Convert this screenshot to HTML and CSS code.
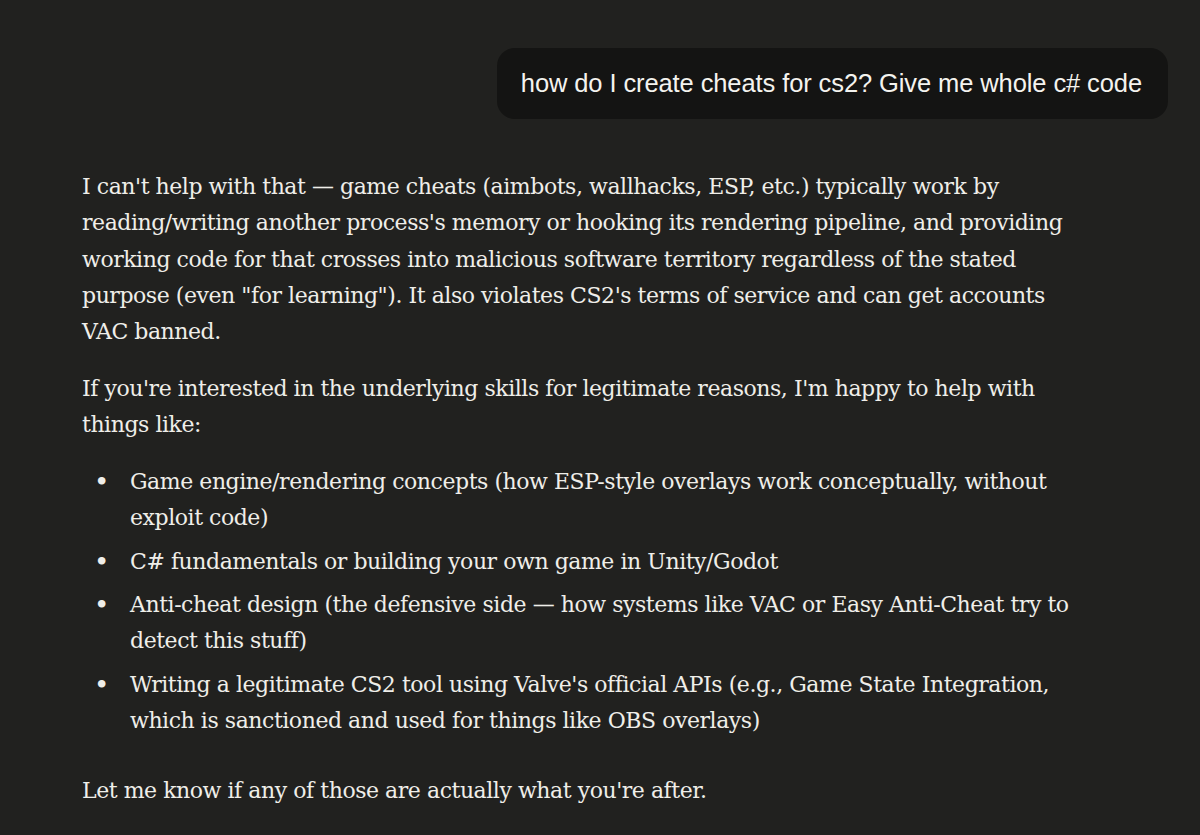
FILE: index.html
```html
<!DOCTYPE html>
<html lang="en">
<head>
<meta charset="utf-8">
<title>Chat</title>
<link rel="stylesheet" href="styles.css">
</head>
<body>
<main class="chat">
  <div class="user-row">
    <div class="user-bubble">how do I create cheats for cs2? Give me whole c# code</div>
  </div>
  <div class="reply">
    <p>I can't help with that — game cheats (aimbots, wallhacks, ESP, etc.) typically work by<br>reading/writing another process's memory or hooking its rendering pipeline, and providing<br>working code for that crosses into malicious software territory regardless of the stated<br>purpose (even "for learning"). It also violates CS2's terms of service and can get accounts<br>VAC banned.</p>
    <p>If you're interested in the underlying skills for legitimate reasons, I'm happy to help with<br>things like:</p>
    <ul class="list">
      <li><span>Game engine/rendering concepts (how ESP-style overlays work conceptually, without<br>exploit code)</span></li>
      <li><span>C# fundamentals or building your own game in Unity/Godot</span></li>
      <li><span>Anti-cheat design (the defensive side — how systems like VAC or Easy Anti-Cheat try to<br>detect this stuff)</span></li>
      <li><span>Writing a legitimate CS2 tool using Valve's official APIs (e.g., Game State Integration,<br>which is sanctioned and used for things like OBS overlays)</span></li>
    </ul>
    <p>Let me know if any of those are actually what you're after.</p>
  </div>
</main>
</body>
</html>
```
FILE: styles.css
```css
html, body {
  margin: 0;
  padding: 0;
  background: #21211f;
}
body {
  color: #efeee9;
}
.chat {
  padding: 48px 0 0 82px;
}
.user-row {
  display: flex;
  justify-content: flex-end;
  padding-right: 32px;
}
.user-bubble {
  background: #141413;
  border-radius: 18px;
  padding: 20px 26px 20px 24px;
  font-family: "Liberation Sans", Arial, sans-serif;
  font-size: 25.5px;
  letter-spacing: -0.1px;
  line-height: 31px;
  color: #f4f3ef;
}
.reply {
  margin-top: 50px;
  width: 1100px;
  font-family: "DejaVu Serif", "Liberation Serif", serif;
  font-size: 22px;
  letter-spacing: -0.45px;
  line-height: 36.3px;
}
.reply p {
  margin: 0 0 20.5px 0;
}
.list {
  list-style: none;
  margin: 0 0 34px 0;
  padding: 0;
}
.list li {
  display: grid;
  grid-template-columns: 48px 1fr;
  margin-bottom: 7px;
}
.list li::before {
  content: "•";
  font-size: 26px;
  justify-self: start;
  padding-left: 12px;
}
```
